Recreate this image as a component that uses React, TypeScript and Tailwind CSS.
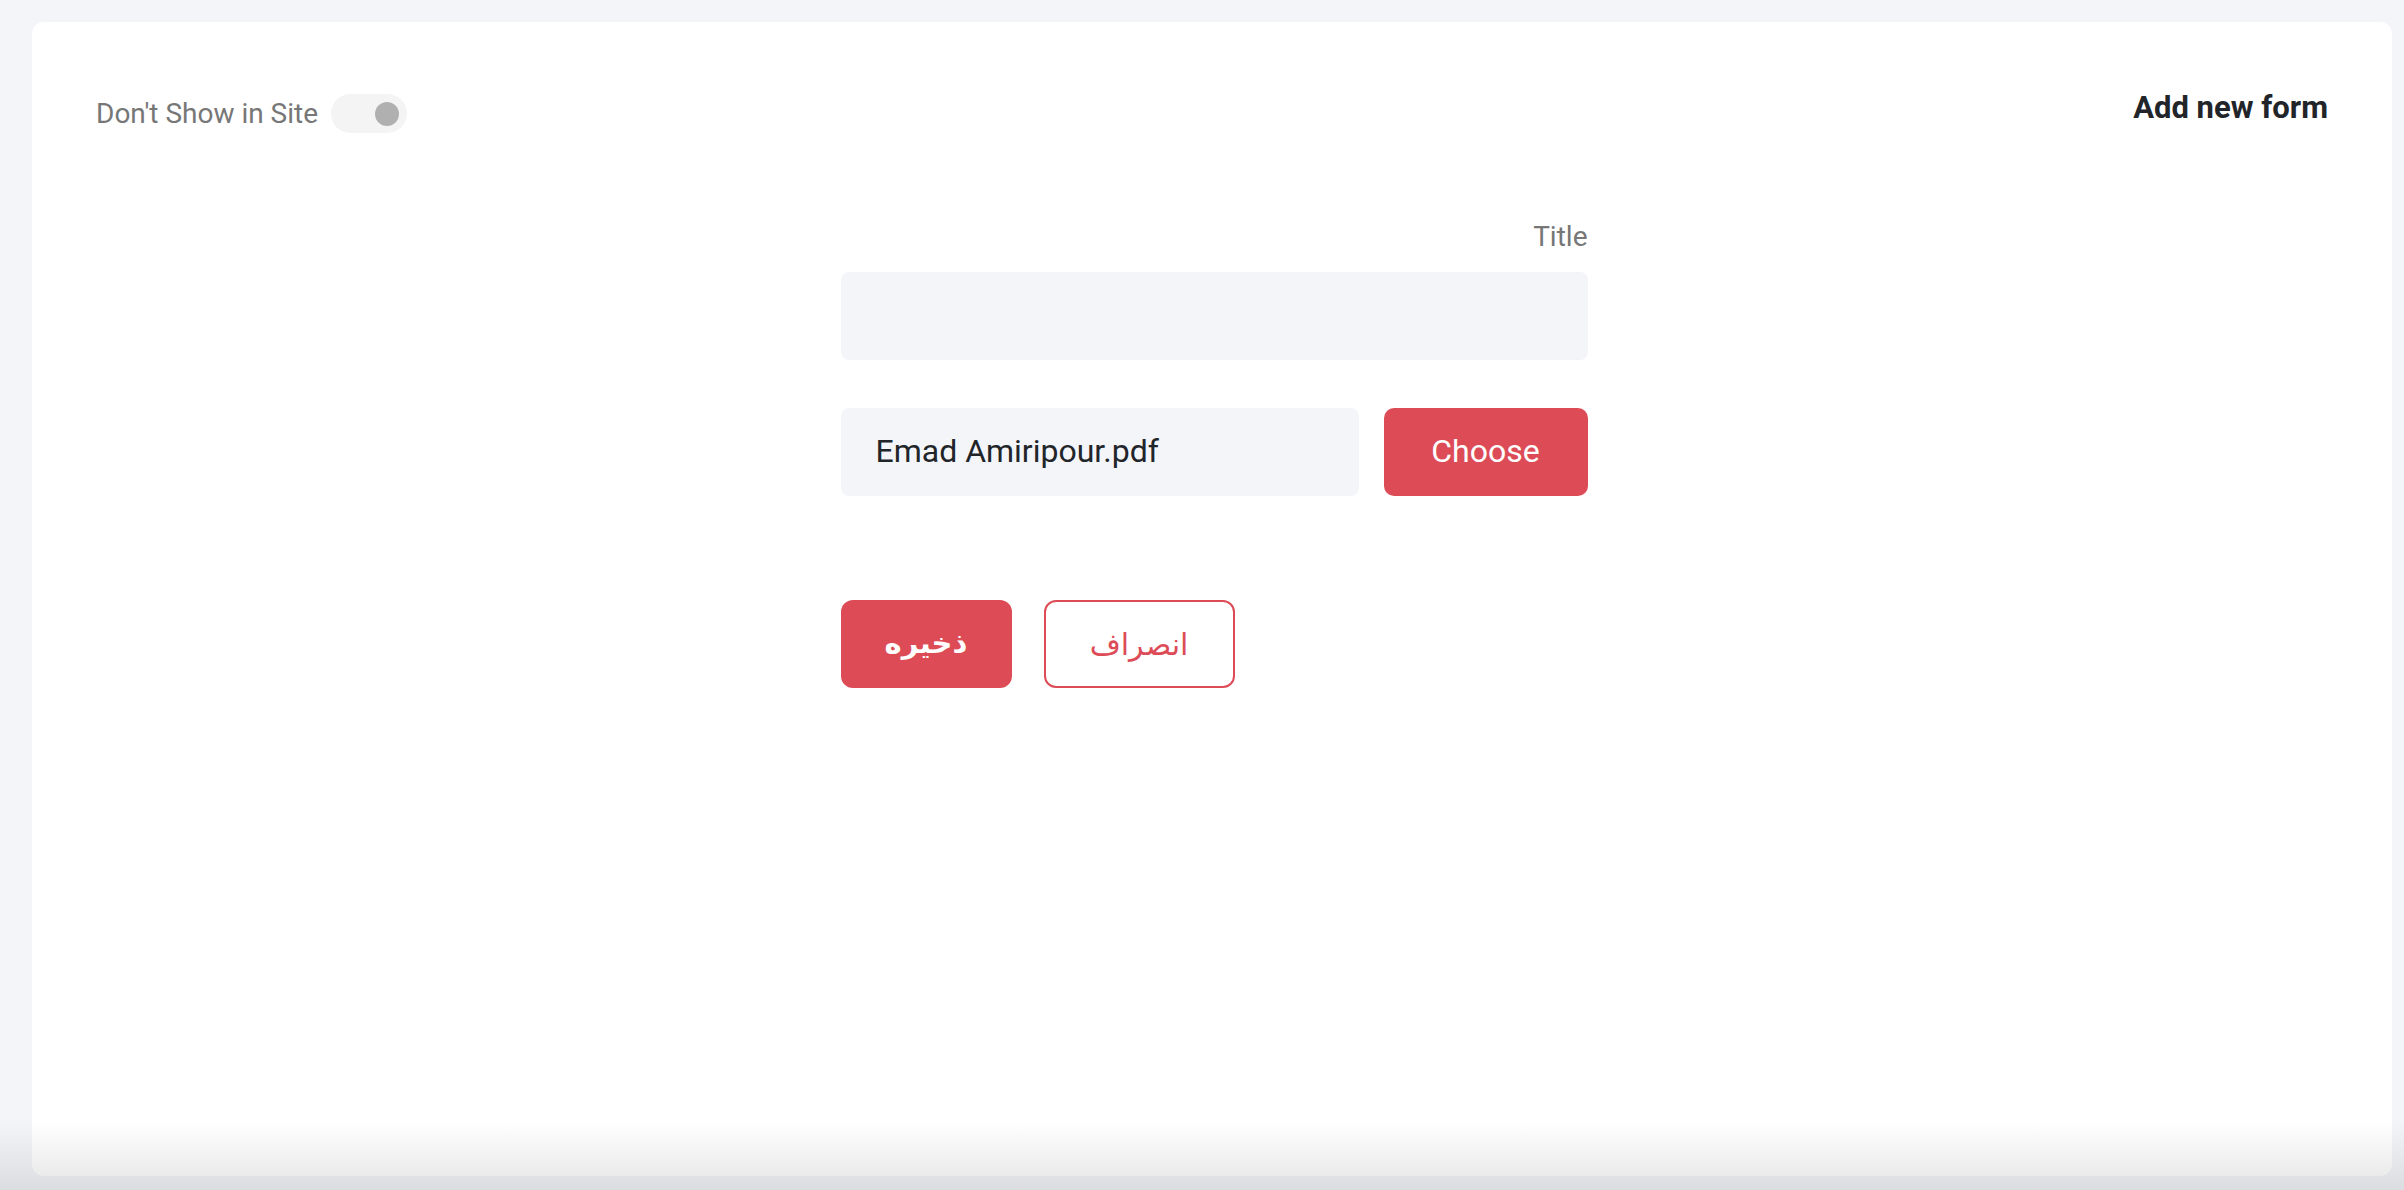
import React, { useState } from "react";

const font = { fontFamily: "Roboto, 'DejaVu Sans', sans-serif" };

const Toggle = ({ on, onChange }: { on: boolean; onChange: (v: boolean) => void }) => (
  <button
    type="button"
    onClick={() => onChange(!on)}
    className="flex h-[39px] w-[76px] items-center rounded-full bg-[#f4f4f4] px-[8px]"
  >
    <span
      className={`h-[24px] w-[24px] rounded-full bg-[#b0b0b0] transition-all ${on ? "ml-0" : "ml-auto"}`}
    />
  </button>
);

export default function App() {
  const [hidden, setHidden] = useState(false);
  const [title, setTitle] = useState("");

  return (
    <div
      className="relative flex h-[1190px] w-full bg-[#f4f5f9] pb-[14px] pl-[32px] pr-[12px] pt-[22px]"
      style={font}
    >
      <div className="flex flex-1 flex-col rounded-[12px] bg-white px-[64px] pt-[70px]">
        {/* header */}
        <div className="flex items-start justify-between">
          <div className="mt-[2px] flex items-center gap-[13px]">
            <span className="text-[28px] leading-none text-[#777777]">Don't Show in Site</span>
            <Toggle on={hidden} onChange={setHidden} />
          </div>
          <h1 className="text-[31px] font-bold leading-none text-[#212529]">Add new form</h1>
        </div>

        {/* form */}
        <div className="mx-auto mt-[90px] flex w-[747px] translate-x-[2px] flex-col">
          <label className="mb-[21px] text-right text-[28px] leading-none text-[#777777]">Title</label>
          <input
            value={title}
            onChange={(e) => setTitle(e.target.value)}
            className="h-[88px] w-full rounded-[8px] bg-[#f4f5f9] px-[35px] text-[32px] text-[#212529] outline-none"
          />

          <div className="mt-[48px] flex gap-[25px]">
            <div className="flex h-[88px] flex-1 items-center rounded-[8px] bg-[#f4f5f9] px-[35px] pb-[2px] text-[32px] text-[#212529]">
              Emad Amiripour.pdf
            </div>
            <button
              type="button"
              className="h-[88px] w-[204px] rounded-[10px] bg-[#dd4c56] pb-[3px] text-[32px] text-white"
            >
              Choose
            </button>
          </div>

          <div className="mt-[104px] flex gap-[32px]">
            <button
              type="button"
              className="h-[88px] w-[171px] rounded-[12px] bg-[#dd4c56] text-[29px] font-semibold text-white"
            >
              ذخیره
            </button>
            <button
              type="button"
              className="h-[88px] w-[191px] rounded-[12px] border-2 border-[#dd4c56] bg-white text-[30px] text-[#dd4c56]"
            >
              انصراف
            </button>
          </div>
        </div>
      </div>

      {/* bottom shade */}
      <div className="pointer-events-none absolute inset-x-0 bottom-0 h-[70px] bg-gradient-to-b from-transparent to-black/10" />
    </div>
  );
}
